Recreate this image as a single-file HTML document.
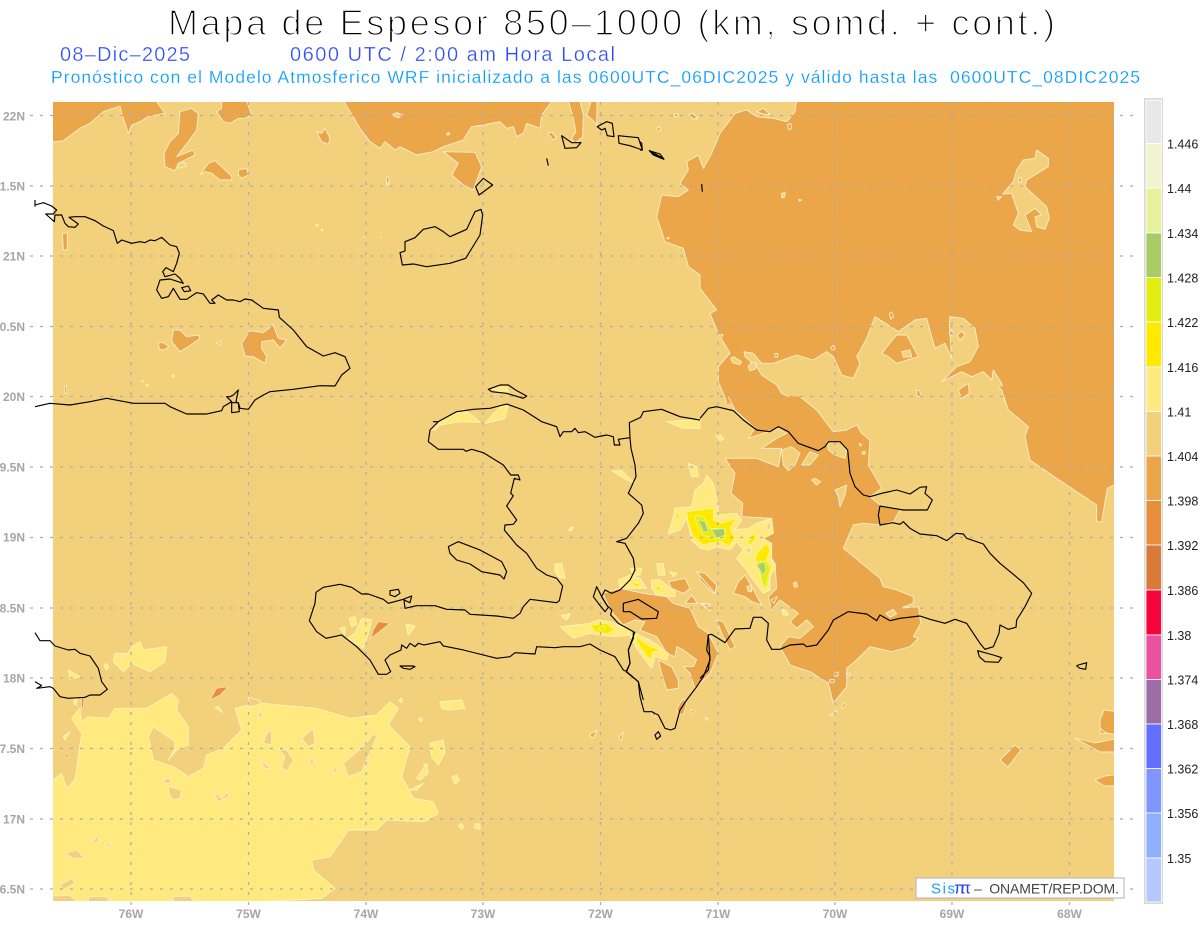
<!DOCTYPE html>
<html><head><meta charset="utf-8"><title>Mapa de Espesor</title>
<style>
html,body{margin:0;padding:0;background:#fff}
svg{display:block;font-family:"Liberation Sans",sans-serif}
path{vector-effect:non-scaling-stroke;stroke-linejoin:round}
.d{fill:#eba64a;stroke:#fbeecb;stroke-width:.9}
.l{fill:#f3d07b;stroke:#fbeecb;stroke-width:.9}
.y{fill:#ffea80;stroke:#fff3b8;stroke-width:.9}
.Y{fill:#ffe900;stroke:#fff3a0;stroke-width:.7}
.L{fill:#e2ee11;stroke:#f5f7a0;stroke-width:.6}
.G{fill:#a9cc66;stroke:#e8f0b0;stroke-width:.6}
.o{fill:#e68e3c;stroke:#fbe3b8;stroke-width:.7}
.c{fill:none;stroke:#000;stroke-width:1.15}
.g{stroke:#a8adb4;stroke-width:1.3;stroke-dasharray:3 7;fill:none}
.t{fill:#a6a6a6;font-size:12px;font-weight:bold}
.n{fill:#222;font-size:12.5px}
</style></head><body>
<svg xmlns="http://www.w3.org/2000/svg" width="1200" height="927" viewBox="0 0 1200 927">
<defs><clipPath id="m"><rect x="53" y="102" width="1061" height="799"/></clipPath></defs>
<rect width="1200" height="927" fill="#fff"/>
<text x="168" y="35" font-size="36" textLength="887" fill="#000" stroke="#fff" stroke-width="1.5">Mapa de Espesor 850–1000 (km, somd. + cont.)</text>
<text x="60" y="61" font-size="20" textLength="130" fill="#2f4dff" stroke="#fff" stroke-width=".3">08–Dic–2025</text>
<text x="290" y="61" font-size="20" textLength="325" fill="#2f4dff" stroke="#fff" stroke-width=".3">0600 UTC / 2:00 am Hora Local</text>
<text x="51" y="83" font-size="17.5" textLength="1089" fill="#0a9cff" stroke="#fff" stroke-width=".2" xml:space="preserve">Pronóstico con el Modelo Atmosferico WRF inicializado a las 0600UTC_06DIC2025 y válido hasta las  0600UTC_08DIC2025</text>

<g clip-path="url(#m)">
<rect x="53" y="102" width="1061" height="799" fill="#f3d07b"/>

<g transform="translate(0,100) scale(.33333)">
<path class="d" d="M100,-20 L150,127 190,122 240,85 270,70 310,35 360,18 365,40 385,100 395,75 420,65 445,50 495,40 470,5 470,-20Z"/>
<path class="d" d="M540,35 575,25 595,40 590,90 565,125 530,170 580,150 585,165 535,190 525,212 495,200 492,160 510,125 535,100Z"/>
<path class="l" d="M535,190 555,188 560,198 535,205Z"/>
<path class="d" d="M665,-10 735,-10 755,45 735,55 715,55 690,70 670,65 650,35 665,25Z"/>
<path class="d" d="M600,225 625,190 645,182 670,205 695,228 695,240 660,240 635,220 615,215Z"/>
<path class="d" d="M715,210 740,205 745,225 725,235 715,225Z"/>
<path class="d" d="M950,95 965,100 975,85 990,115 985,133 965,125Z"/>
<path class="d" d="M187,400 202,398 202,450 190,450Z"/>
<path class="d" d="M520,690 540,690 560,710 595,705 600,715 565,740 540,755 515,725Z"/>
<path class="d" d="M475,728 490,728 507,740 490,750 478,748Z"/>
<path class="d" d="M725,730 750,692 790,698 820,675 835,715 860,720 840,745 820,720 785,725 785,745 800,770 795,790 760,770 735,768Z"/>
<path class="d" d="M648,730 662,722 662,733Z"/>
<path class="d" d="M1158,235 1165,232 1168,250 1160,255Z"/>
<path class="d" d="M193,860 200,855 200,880 194,880Z"/>
</g>

<g transform="translate(300,95) scale(.33333)">
<path class="d" d="M120,0 180,100 210,140 240,160 255,140 285,165 300,155 350,180 400,170 430,155 490,135 515,95 550,90 600,80 620,100 640,95 650,125 670,115 680,85 720,100 725,60 770,0Z"/>
<path class="l" d="M275,60 290,53 310,60 295,68Z"/>
<path class="d" d="M430,170 525,172 545,215 520,285 490,270 455,240 475,205Z"/>
<path class="d" d="M800,0 820,70 828,110 815,130 825,145 848,125 850,60 835,0Z"/>
<path class="d" d="M860,60 880,0 892,0 890,90 878,75Z"/>
<path class="d" d="M743,115 755,112 770,128 760,135Z"/>
<path class="d" d="M258,250 263,243 268,258 262,270Z"/>
<path class="d" d="M1168,60 1180,55 1192,72 1178,70Z"/>
<path class="l" d="M440,116 447,112 449,119 442,120Z"/>
</g>

<g transform="translate(640,100) scale(.33333)">
<path class="d" d="M258,910 258,900 235,845 235,800 270,760 235,700 210,640 230,630 180,565 180,525 145,500 130,445 75,425 50,350 65,285 115,290 145,270 120,250 145,210 140,185 175,165 190,205 215,160 240,100 285,40 320,30 350,50 400,55 440,65 465,35 470,0 470,-10 1440,-10 1440,910 1095,910 1085,850 1060,810 1055,840 1030,815 995,830 965,815 905,845 950,800 990,785 1015,740 1005,685 970,655 930,650 928,680 935,775 915,730 885,745 860,655 825,660 775,695 705,650 680,715 650,770 660,790 640,835 605,825 580,770 560,755 520,780 470,765 400,790 365,790 340,760 312,755 315,770 350,800 365,825 410,855 425,880 490,910"/>
<path class="d" d="M725,760 770,705 800,705 835,770 800,780 770,790 745,770Z"/>
<path class="l" d="M785,755 810,750 815,770 790,772Z"/>
<path class="l" d="M1190,150 1225,175 1225,200 1160,240 1155,260 1220,320 1228,355 1215,388 1190,380 1185,350 1205,345 1185,325 1155,345 1175,395 1140,390 1120,375 1135,340 1115,280 1088,282 1120,245 1130,210 1150,180 1185,175Z"/>
<path class="d" d="M1136,233 1144,233 1145,246 1137,246Z"/>
<path class="l" d="M1070,290 1085,290 1075,300Z"/>
<path class="l" d="M425,280 436,278 432,294 424,292Z"/>
<path class="l" d="M476,298 484,300 478,304Z"/>
<path class="l" d="M81,413 88,413 84,418Z"/>
<path class="l" d="M242,704 248,702 248,710Z"/>
<path class="l" d="M272,775 280,770 305,785 300,794 278,788Z"/>
<path class="l" d="M324,800 335,786 350,790 345,808 330,812Z"/>
<path class="d" d="M935,690 940,700 935,708 928,700Z"/>
<path class="d" d="M952,706 965,694 975,706 960,720Z"/>
<path class="d" d="M955,870 985,850 988,880 965,895Z"/>
<path class="d" d="M350,35 370,25 392,45 370,42Z"/>
<path class="d" d="M147,43 158,40 172,53 160,58Z"/>
<path class="d" d="M102,42 112,40 115,48 106,52Z"/>
<path class="d" d="M50,85 58,80 62,90 54,94Z"/>
<path class="d" d="M442,74 452,70 455,85 446,90Z"/>
<path class="d" d="M748,640 755,636 761,650 752,658Z"/>
<path class="d" d="M572,742 582,736 585,748 576,750Z"/>
<path class="d" d="M403,762 413,760 414,770 405,772Z"/>
<path class="d" d="M828,870 838,872 844,888 832,890Z"/>
</g>

<g transform="translate(700,390) scale(.33333)">
<path class="d" d="M895,-10 905,0 925,60 985,110 975,140 990,210 1070,265 1190,345 1190,395 1205,395 1222,295 1242,285 1260,285 1260,-10"/>
<path class="d" d="M300,20 350,60 400,125 440,120 470,105 485,130 510,150 505,225 545,295 510,320 540,345 600,360 580,395 540,405 490,400 460,405 445,440 430,475 485,520 540,565 550,590 590,600 640,620 640,640 600,655 655,650 662,700 640,740 655,745 630,770 575,785 510,770 470,810 440,835 440,890 400,940 385,880 330,845 270,825 240,770 265,740 300,745 340,710 320,690 290,715 270,695 295,670 240,630 215,660 205,620 230,595 225,520 180,455 215,400 215,385 125,380 128,340 93,310 105,250 75,205 100,205 170,205 235,230 245,175 185,175 230,145 260,130 235,115 145,145 165,115 105,60 85,20"/>
<path class="l" d="M245,180 275,170 300,190 285,225 265,242 250,225Z"/>
<path class="l" d="M305,225 330,185 355,195 330,225Z"/>
<path class="l" d="M335,270 345,265 362,275 350,285Z"/>
<path class="l" d="M405,300 440,285 435,315 420,350 415,320Z"/>
<path class="l" d="M380,155 420,155 440,180 435,205 405,195 385,180Z"/>
<path class="l" d="M280,580 288,575 293,590 283,592Z"/>
<path class="l" d="M557,670 580,658 590,672 570,682Z"/>
<path class="l" d="M478,160 485,165 480,168Z"/>
<path class="l" d="M486,186 495,184 495,192 488,192Z"/>
<path class="d" d="M100,610 115,575 135,555 155,590 185,645 155,635 135,620Z"/>
<path class="l" d="M140,590 155,585 155,605 145,605Z"/>
<path class="d" d="M50,690 70,695 105,770 90,780 65,730Z"/>
<path class="d" d="M0,545 50,590 40,610 0,570Z"/>
<path class="d" d="M0,640 30,640 30,665 10,645Z"/>
<path class="d" d="M1205,985 1215,960 1250,965 1250,1030 1200,1030Z"/>
<path class="d" d="M424,950 434,938 438,945 428,956Z"/>
<path class="d" d="M388,870 402,868 404,878 390,878Z"/>
<path class="d" d="M403,848 414,846 414,858 404,858Z"/>
<path class="d" d="M388,974 400,970 398,978Z"/>
<path class="d" d="M403,964 412,961 408,968Z"/>
<path class="d" d="M438,850 450,850 448,858Z"/>
<path class="y" d="M47,135 58,132 72,147 60,152Z"/>
<path class="y" d="M245,655 260,665 262,675 248,672Z"/>
</g>

<path class="d" d="M1100,720 1104,710 1120,712 1120,735 1106,733 1100,728Z"/>
<path class="d" d="M1075,738 1095,743 1120,738 1120,752 1100,752Z"/>
<path class="d" d="M1095,780 1105,776 1120,774 1120,786 1104,786Z"/>
<path class="d" d="M1000,760 1015,745 1021,750 1008,767Z"/>

<g transform="translate(540,440) scale(.33333)">
<path class="d" d="M190,460 240,445 310,460 380,470 400,490 450,505 475,560 505,580 535,640 510,700 465,745 450,700 430,680 460,680 470,660 430,630 410,620 405,650 380,640 350,590 300,570 315,545 285,540 250,555 215,515 195,475Z"/>
<path class="d" d="M355,660 395,680 415,720 415,745 380,750 365,700Z"/>
<path class="d" d="M385,425 435,415 450,445 430,460 395,445Z"/>
<path class="d" d="M435,490 455,465 472,490Z"/>
<path class="d" d="M485,490 510,495 500,502Z"/>
<path class="d" d="M470,395 495,400 530,435 525,460 495,425Z"/>
<path class="d" d="M410,805 430,775 440,790 430,825 415,820Z"/>
<path class="d" d="M148,885 170,870 160,895Z"/>
<path class="d" d="M235,895 250,875 245,900Z"/>
<path class="d" d="M335,815 350,820 345,830 335,825Z"/>
<path class="d" d="M455,808 465,815 458,822 452,815Z"/>
<path class="l" d="M495,832 505,835 500,842Z"/>
<path class="y" d="M215,92 245,92 285,130 260,120Z"/>
<path class="y" d="M45,372 60,372 75,410 60,415 45,395Z"/>
<path class="y" d="M445,70 470,80 475,110 455,110Z"/>
<path class="y" d="M350,370 370,370 375,405 355,405Z"/>
<path class="y" d="M390,395 410,400 400,410Z"/>
<path class="y" d="M270,385 305,385 300,405 280,405Z"/>
<path class="y" d="M235,420 270,405 300,415 320,445 255,445 240,440Z"/>
<path class="Y" d="M260,425 300,432 295,442Z"/>
<path class="y" d="M335,420 360,420 405,455 405,470 350,465 335,445Z"/>
<path class="Y" d="M345,440 365,440 355,455Z"/>
<path class="y" d="M65,525 90,525 80,540Z"/>
<path class="y" d="M60,560 150,550 175,540 210,545 270,570 285,580 330,600 385,640 380,660 345,650 335,685 290,625 270,585 220,590 150,580 100,595Z"/>
<path class="Y" d="M150,555 200,550 225,570 200,582 165,575Z"/>
<path class="L" d="M178,562 195,560 192,570 180,570Z"/>
<path class="Y" d="M282,585 330,620 365,630 340,635 330,660 300,620Z"/>
<path class="Y" d="M90,572 102,572 96,578Z"/>
<path class="y" d="M500,105 520,130 535,200 535,225 590,220 605,240 585,270 625,265 650,250 695,235 700,280 670,295 695,310 695,360 708,380 690,410 690,450 670,460 640,420 615,385 590,355 610,330 590,305 570,330 530,320 505,330 480,325 455,300 440,235 420,270 385,282 400,230 405,205 455,200 465,150 490,130Z"/>
<path class="Y" d="M440,215 520,205 520,240 545,250 590,235 570,265 585,295 565,320 545,305 510,310 490,315 460,290 445,250Z"/>
<path class="L" d="M465,225 490,230 510,265 555,265 555,295 520,295 490,285 470,255Z"/>
<path class="G" d="M475,240 495,245 505,275 490,275Z"/>
<path class="G" d="M515,270 552,265 555,285 530,295Z"/>
<path class="Y" d="M680,310 690,330 680,360 695,380 682,440 670,445 660,400 645,350 655,335Z"/>
<path class="L" d="M650,365 680,365 690,385 680,430 670,445 662,410Z"/>
<path class="G" d="M650,375 672,365 678,390 670,405Z"/>
<path class="Y" d="M622,310 640,280 650,290 632,315Z"/>
<path class="l" d="M615,325 635,325 625,345Z"/>
<path class="l" d="M680,250 692,250 690,270 682,268Z"/>
<path class="Y" d="M408,222 420,220 410,242Z"/>
<path class="y" d="M725,505 740,515 745,525 730,525Z"/>
<path class="d" d="M693,480 712,470 702,490Z"/>
<path class="y" d="M90,262 100,262 96,270Z"/>
</g>

<g transform="translate(300,380) scale(.33333)">
<path class="y" d="M390,150 420,125 490,88 515,105 540,127 480,125 420,135 405,150Z"/>
<path class="y" d="M555,130 600,80 625,78 615,115 580,125Z"/>
<path class="y" d="M578,28 620,15 625,40 600,35Z"/>
<path class="y" d="M147,715 165,710 170,735 155,740Z"/>
<path class="y" d="M185,715 215,720 205,760 190,805 140,775 165,760Z"/>
<path class="Y" d="M195,735 205,732 200,748Z"/>
<path class="y" d="M120,745 135,740 135,765Z"/>
<path class="o" d="M235,725 270,730 212,775 220,750Z"/>
<path class="y" d="M320,745 345,740 325,765Z"/>
<path class="y" d="M1100,125 1165,120 1200,115 1200,145 1150,145Z"/>
<path class="y" d="M770,555 785,550 795,595 775,590Z"/>
<path class="y" d="M785,710 810,700 800,720Z"/>
</g>

<g transform="translate(0,620) scale(.33333)">
<path class="y" d="M130,480 160,480 185,460 200,505 225,480 245,340 215,295 240,265 245,305 265,290 325,295 345,265 440,265 515,220 535,240 530,270 565,320 565,375 530,390 505,420 525,385 525,365 460,320 445,350 460,420 520,440 565,470 610,445 620,405 670,385 725,330 705,265 745,255 785,250 950,265 1050,295 1130,285 1170,245 1195,265 1165,315 1230,380 1205,470 1225,505 1240,535 1300,545 1315,580 1275,605 1160,600 1130,630 1045,630 1025,660 990,710 935,720 940,750 1005,805 965,835 800,845 800,900 130,900Z"/>
<path class="y" d="M395,80 420,65 430,90 500,80 495,125 450,155 395,130 370,155 340,125 345,100 385,100Z"/>
<path class="l" d="M780,420 815,445 795,445Z"/>
<path class="l" d="M800,340 815,330 815,375 790,370Z"/>
<path class="l" d="M905,355 940,325 945,370 925,380Z"/>
<path class="l" d="M835,385 860,390 880,420 860,455 845,440 855,410Z"/>
<path class="l" d="M925,420 945,420 935,435Z"/>
<path class="l" d="M1065,400 1100,370 1120,340 1130,350 1100,420 1085,455 1045,470 1030,430Z"/>
<path class="l" d="M1000,440 1015,450 1000,460Z"/>
<path class="l" d="M505,500 545,510 540,535 520,540 508,525Z"/>
<path class="l" d="M490,480 510,475 510,490 495,490Z"/>
<path class="l" d="M640,515 665,535 685,515 685,530 655,545Z"/>
<path class="l" d="M780,270 790,290 775,290Z"/>
<path class="l" d="M275,665 290,650 300,665Z"/>
<path class="l" d="M320,670 335,665 318,685Z"/>
<path class="l" d="M195,700 230,690 255,715 220,715Z"/>
<path class="l" d="M180,795 215,775 225,790 190,808Z"/>
<path class="l" d="M265,830 320,830 330,850 265,850Z"/>
<path class="l" d="M520,830 570,828 585,850 520,850Z"/>
<path class="l" d="M130,830 210,825 235,850 130,850Z"/>
<path class="l" d="M365,100 372,108 362,112Z"/>
<path class="l" d="M745,232 775,240 785,250 750,262Z"/>
<path class="y" d="M1290,370 1330,360 1335,400 1315,435 1295,410Z"/>
<path class="y" d="M1250,475 1280,430 1285,460 1260,480Z"/>
<path class="Y" d="M1270,432 1276,432 1274,440Z"/>
<path class="y" d="M1230,510 1270,490 1250,510Z"/>
<path class="y" d="M1355,470 1370,465 1378,480 1365,492Z"/>
<path class="Y" d="M1362,472 1368,472 1365,482Z"/>
<path class="y" d="M1320,245 1385,240 1395,265 1345,270 1325,265Z"/>
<path class="y" d="M205,150 240,170 210,178Z"/>
<path class="y" d="M1375,617 1383,610 1392,620 1383,627Z"/>
<path class="y" d="M1425,612 1440,612 1440,628 1425,625Z"/>
<path class="y" d="M1197,240 1205,234 1208,244 1202,248Z"/>
<path class="y" d="M1255,297 1262,292 1268,300 1262,305Z"/>
<path class="y" d="M1218,12 1245,18 1225,45Z"/>
<path class="y" d="M312,135 320,130 326,142 318,150Z"/>
<path class="y" d="M190,350 210,335 195,360Z"/>
<path class="y" d="M645,262 655,258 668,278 655,270Z"/>
<path class="o" d="M630,240 650,205 685,200 660,225Z"/>
<path class="o" d="M195,405 205,400 200,415Z"/>
<path class="o" d="M245,230 252,230 250,262 245,265Z"/>
<path class="y" d="M222,235 232,232 230,255 222,252Z"/>
<path class="o" d="M1200,272 1208,270 1204,278Z"/>
</g>

<g fill="#ffeeb0">
<circle cx="317" cy="225" r="1.6"/><circle cx="322" cy="230" r="1.3"/><circle cx="147" cy="385" r="1.5"/><circle cx="143" cy="381" r="1"/>
<circle cx="173" cy="376" r="1.5"/><circle cx="364" cy="237" r=".9"/><circle cx="381" cy="237" r=".9"/><circle cx="93" cy="397" r="1"/>
<circle cx="142" cy="381" r="1"/><circle cx="570" cy="530" r="1.5"/>
</g>
</g>

<path class="g" d="M30,115.5H1134M30,186H1134M30,256H1134M30,326.500H1134M30,396.500H1134M30,467H1134M30,537.500H1134M30,608H1134M30,678H1134M30,748.500H1134M30,819H1134M30,889H1134"/>
<path class="g" d="M131,102V908M248.500,102V908M366,102V908M483,102V908M600.500,102V908M718,102V908M835,102V908M952,102V908M1069.500,102V908"/>

<g class="t" text-anchor="end">
<text x="25" y="120.500">22N</text><text x="25" y="190.500">1.5N</text><text x="25" y="260.500">21N</text><text x="25" y="331">0.5N</text><text x="25" y="401">20N</text><text x="25" y="471.500">9.5N</text><text x="25" y="541.500">19N</text><text x="25" y="612.500">8.5N</text><text x="25" y="682.500">18N</text><text x="25" y="753">7.5N</text><text x="25" y="823.500">17N</text><text x="25" y="893.500">6.5N</text>
</g>
<g class="t" text-anchor="middle">
<text x="131" y="918">76W</text><text x="248.500" y="918">75W</text><text x="366" y="918">74W</text><text x="483" y="918">73W</text><text x="600.500" y="918">72W</text><text x="718" y="918">71W</text><text x="835" y="918">70W</text><text x="952" y="918">69W</text><text x="1069.500" y="918">68W</text>
</g>

<g>
<g transform="translate(0,100) scale(.33333)">
<path class="c" d="M105,300 105,320 M105,315 130,308 155,318 170,330 160,342 137,342 163,365 165,345 185,345 195,370 205,380 225,382 235,372 207,352 225,350 255,350 285,362 310,378 340,392 352,430 365,420 395,430 420,425 435,428 450,420 465,422 485,412 510,435 530,440 538,460 530,490 520,515 498,503 488,515 495,530 525,522 540,535 550,550 510,537 480,540 470,570 485,595 505,590 520,565 540,598 560,598 590,578 610,582 630,610 645,610 635,600 655,585 680,600 700,600 720,605 735,597 755,600 790,625 835,630 838,652 880,690 920,740 970,768 1005,758 1035,770 1050,805 1025,825 1005,858 960,857 880,868 810,875 790,885 765,900 745,928 720,925 715,908 695,908 695,938 718,935 715,910 708,905 715,870 700,885 690,890 680,890 695,905 670,920 665,932 620,942 560,942 510,920 495,910 400,910 320,895 270,905 210,915 150,910 105,920"/>
<path class="c" d="M545,563 565,558 572,572 553,575Z"/>
</g>
<g transform="translate(0,620) scale(.33333)">
<path class="c" d="M105,38 120,62 150,62 165,78 205,90 225,88 240,100 270,108 295,145 305,185 322,208 300,225 270,225 255,232 205,235 180,230 160,205 150,200 110,205 125,197 105,185"/>
</g>
<g transform="translate(300,95) scale(.33333)">
<path class="c" d="M315,440 345,428 370,403 405,395 430,410 450,425 500,403 525,350 543,343 548,360 540,420 497,490 450,505 380,515 340,507 307,510 300,473 315,468Z"/>
<path class="c" d="M527,275 550,250 578,270 537,300Z"/>
<path class="c" d="M785,122 815,143 843,143 830,158 795,160Z"/>
<path class="c" d="M892,95 920,80 937,85 942,125 922,122 915,100 905,105Z"/>
<path class="c" d="M955,122 1015,128 1027,165 990,152 957,145Z"/>
<path class="c" d="M1048,167 1090,190 1065,180Z"/>
<path class="c" d="M740,190 745,212"/>
</g>
<g transform="translate(300,380) scale(.33333)">
<path class="c" d="M1200,120 1140,110 1085,88 1030,95 1022,112 988,128 990,173 955,178 960,195 943,195 940,170 920,165 885,172 855,155 835,158 825,145 815,155 790,155 780,170 770,140 725,125 670,90 620,72 570,85 520,88 470,95 415,125 400,125 415,125 390,150 385,185 415,208 490,208 498,214 515,208 550,218 610,255 632,285 655,285 660,300 643,295 632,340 640,347 620,378 650,420 640,433 615,435 613,450 650,495 680,520 710,565 740,585 770,595 788,618 778,662 770,668 690,658 670,680 660,700 640,715 590,708 510,703 495,690 440,688 405,677 350,677 315,685 312,660 330,668 335,648 310,658 265,670 250,658 205,642 185,642 155,622 120,613 70,622 48,637 45,670 28,722 50,755 78,775 125,765 170,800 210,840 235,883 260,883 272,875 255,840 270,825 303,810 305,795 320,805 330,790 345,800 355,790 372,795 420,785 430,798 490,810 590,835 630,830 645,818 705,822 710,800 765,803 790,800 840,800 870,792 900,810 945,830 970,870 980,875 1015,905 1030,960"/>
<path class="c" d="M990,173 993,205 1005,255 1008,290 985,340 1025,375 1030,400 1015,430 980,475 950,485 975,490 1000,535 1005,570 990,600 960,630 935,640 915,630 905,650 920,675 935,690 932,705 955,730 1000,755 1000,775 985,810 990,850 980,875"/>
<path class="c" d="M445,500 475,485 540,510 605,545 620,575 612,597 600,585 545,575 510,552 470,540 450,520Z"/>
<path class="c" d="M565,28 600,15 625,15 650,32 680,48 670,55 620,40 575,35Z"/>
<path class="c" d="M270,632 295,628 300,640 285,650 270,645Z"/>
<path class="c" d="M300,858 340,858 345,860 330,868 310,865Z"/>
<path class="c" d="M890,620 880,650 895,670 915,695 925,682 905,650Z"/>
<path class="c" d="M970,670 1015,658 1075,695 1070,715 1025,717 990,695 970,695Z"/>
</g>
<g transform="translate(700,390) scale(.33333)">
<path class="c" d="M0,85 25,55 50,50 100,62 130,90 170,120 210,125 235,110 265,125 295,160 355,182 375,170 385,155 420,155 443,180 450,250 465,290 490,315 510,320 545,310 590,300 630,312 660,292 680,290 675,310 697,330 682,360 610,360 540,348 535,375 540,405 578,398 600,403 610,395 630,415 660,432 710,437 740,452 768,430 790,432 800,445 850,462 870,490 900,520 970,578 995,610 975,650 950,690 948,712 925,718 900,705 897,730 880,770 855,778 840,760 800,700 765,688 735,700 690,688 660,678 600,685 570,692 540,675 530,692 500,672 445,665 400,690 385,720 350,765 320,770 310,762 270,765 240,778 215,778 200,750 205,700 185,682 160,682 150,715 105,717 75,758 35,733 25,735 20,780 30,800 25,840 0,865"/>
<path class="c" d="M833,782 880,795 905,803 895,817 855,815 838,800Z"/>
<path class="c" d="M1135,825 1160,818 1157,838 1140,835 1130,828Z"/>
</g>
<g transform="translate(540,440) scale(.33333)">
<path class="c" d="M258,695 295,725 300,770 312,815 335,815 355,825 375,865 392,870 405,865 420,810 440,780 470,740 490,710 510,660 505,585"/>
<path class="c" d="M345,885 355,875 362,888 350,898Z"/>
<path class="c" d="M285,575 265,630 270,670 258,695"/>
</g>
<g transform="translate(640,100) scale(.33333)">
<path class="c" d="M28,152 60,162 72,178 40,165Z"/>
<path class="c" d="M0,125 5,130 7,150 0,150"/>
<path class="c" d="M185,252 187,275"/>
</g>
</g>

<rect x="1145" y="99" width="17" height="804" fill="#fff" stroke="#d8d8d8" stroke-width="2"/>
<g stroke="#fff" stroke-width=".8">
<rect x="1146" y="100" width="15.500" height="43.500" fill="#e8e8e8"/>
<rect x="1146" y="143.500" width="15.500" height="44.500" fill="#f0f5d0"/>
<rect x="1146" y="188" width="15.500" height="45" fill="#e6f2a0"/>
<rect x="1146" y="233" width="15.500" height="44.500" fill="#a9cc66"/>
<rect x="1146" y="277.500" width="15.500" height="44.500" fill="#e2ee11"/>
<rect x="1146" y="322" width="15.500" height="45" fill="#ffe900"/>
<rect x="1146" y="367" width="15.500" height="44.500" fill="#ffea80"/>
<rect x="1146" y="411.500" width="15.500" height="44.500" fill="#f3d07b"/>
<rect x="1146" y="456" width="15.500" height="44.500" fill="#eba64a"/>
<rect x="1146" y="500.500" width="15.500" height="44.500" fill="#e68e3c"/>
<rect x="1146" y="545" width="15.500" height="45" fill="#d97a38"/>
<rect x="1146" y="590" width="15.500" height="45" fill="#f5053c"/>
<rect x="1146" y="635" width="15.500" height="44.500" fill="#ea519f"/>
<rect x="1146" y="679.500" width="15.500" height="44.500" fill="#9b6ca6"/>
<rect x="1146" y="724" width="15.500" height="44.500" fill="#6370ff"/>
<rect x="1146" y="768.500" width="15.500" height="44.500" fill="#7f96ff"/>
<rect x="1146" y="813" width="15.500" height="45" fill="#8fb0ff"/>
<rect x="1146" y="858" width="15.500" height="44" fill="#b5c8ff"/>
</g>
<g class="n">
<text x="1167" y="148.500">1.446</text><text x="1167" y="193">1.44</text><text x="1167" y="238">1.434</text><text x="1167" y="282.500">1.428</text><text x="1167" y="327">1.422</text><text x="1167" y="372">1.416</text><text x="1167" y="416.500">1.41</text><text x="1167" y="461">1.404</text><text x="1167" y="505.500">1.398</text><text x="1167" y="550">1.392</text><text x="1167" y="595">1.386</text><text x="1167" y="640">1.38</text><text x="1167" y="684.500">1.374</text><text x="1167" y="729">1.368</text><text x="1167" y="773.500">1.362</text><text x="1167" y="818">1.356</text><text x="1167" y="863">1.35</text>
</g>

<rect x="916" y="878" width="208" height="20" fill="#fff" stroke="#bdbdbd" stroke-width="1.2"/>
<text x="931" y="893.500" font-size="15" fill="#1e9bff" textLength="24">Sis</text>
<text x="954" y="893.500" font-size="17" fill="#2a3cff" textLength="17">ππ</text>
<text x="974" y="893.500" font-size="14" fill="#444" textLength="145" xml:space="preserve">–  ONAMET/REP.DOM.</text>
</svg>
</body></html>
